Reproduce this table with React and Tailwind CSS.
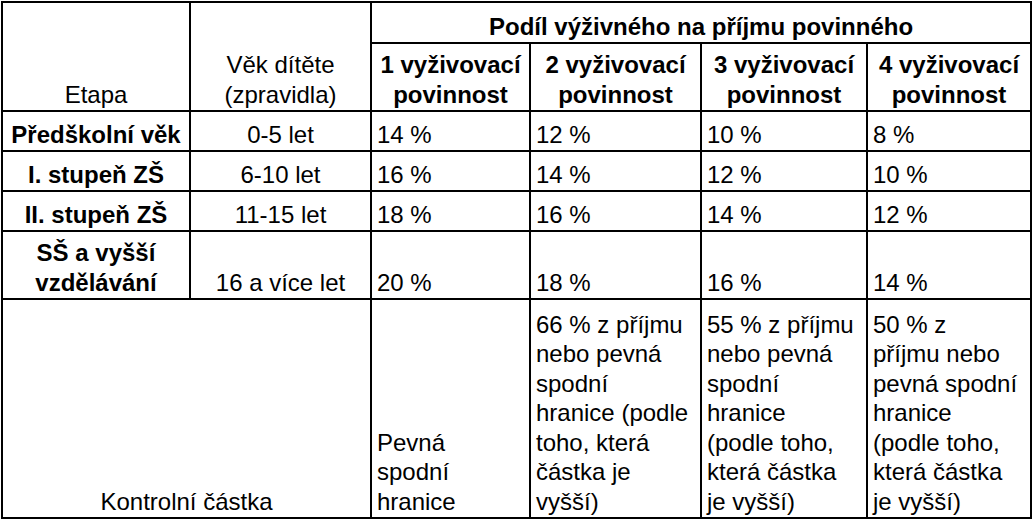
import React from 'react';

const cell = 'border-2 border-black align-bottom px-[5px] pb-[1px] pt-0 whitespace-nowrap';

const rows = [
  { etapa: ['Předškolní věk'], vek: '0-5 let', pct: ['14 %', '12 %', '10 %', '8 %'], h: 'h-[40px]' },
  { etapa: ['I. stupeň ZŠ'], vek: '6-10 let', pct: ['16 %', '14 %', '12 %', '10 %'], h: 'h-[40px]' },
  { etapa: ['II. stupeň ZŠ'], vek: '11-15 let', pct: ['18 %', '16 %', '14 %', '12 %'], h: 'h-[40px]' },
  { etapa: ['SŠ a vyšší', 'vzdělávání'], vek: '16 a více let', pct: ['20 %', '18 %', '16 %', '14 %'], h: 'h-[68px]' },
];

const kontrolni = [
  ['Pevná', 'spodní', 'hranice'],
  ['66 % z příjmu', 'nebo pevná', 'spodní', 'hranice (podle', 'toho, která', 'částka je', 'vyšší)'],
  ['55 % z příjmu', 'nebo pevná', 'spodní', 'hranice', '(podle toho,', 'která částka', 'je vyšší)'],
  ['50 % z', 'příjmu nebo', 'pevná spodní', 'hranice', '(podle toho,', 'která částka', 'je vyšší)'],
];

const Lines = ({ lines }) =>
  lines.map((l, i) => (
    <React.Fragment key={i}>
      {i > 0 && <br />}
      {l}
    </React.Fragment>
  ));

export default function App() {
  return (
    <div className="w-[1032px] h-[519px] bg-white overflow-hidden pt-[1px] pl-[1px]">
      <table className="table-fixed border-collapse w-[1029px] text-black text-[24px] leading-[29.5px] font-['Liberation_Sans',Arial,sans-serif]">
        <colgroup>
          <col className="w-[188px]" />
          <col className="w-[181px]" />
          <col className="w-[159px]" />
          <col className="w-[171px]" />
          <col className="w-[166px]" />
          <col className="w-[164px]" />
        </colgroup>
        <tbody>
          <tr className="h-[41px]">
            <td rowSpan={2} className={`${cell} text-center`}>Etapa</td>
            <td rowSpan={2} className={`${cell} text-center`}>
              Věk dítěte
              <br />
              (zpravidla)
            </td>
            <td colSpan={4} className={`${cell} text-center font-bold`}>
              Podíl výživného na příjmu povinného
            </td>
          </tr>
          <tr className="h-[68px]">
            {[1, 2, 3, 4].map((n) => (
              <td key={n} className={`${cell} text-center font-bold`}>
                {n} vyživovací
                <br />
                povinnost
              </td>
            ))}
          </tr>
          {rows.map((r) => (
            <tr key={r.vek} className={r.h}>
              <td className={`${cell} text-center font-bold`}>
                <Lines lines={r.etapa} />
              </td>
              <td className={`${cell} text-center`}>{r.vek}</td>
              {r.pct.map((p, i) => (
                <td key={i} className={cell}>{p}</td>
              ))}
            </tr>
          ))}
          <tr className="h-[219px]">
            <td colSpan={2} className={`${cell} text-center`}>Kontrolní částka</td>
            {kontrolni.map((k, i) => (
              <td key={i} className={cell}>
                <Lines lines={k} />
              </td>
            ))}
          </tr>
        </tbody>
      </table>
    </div>
  );
}
